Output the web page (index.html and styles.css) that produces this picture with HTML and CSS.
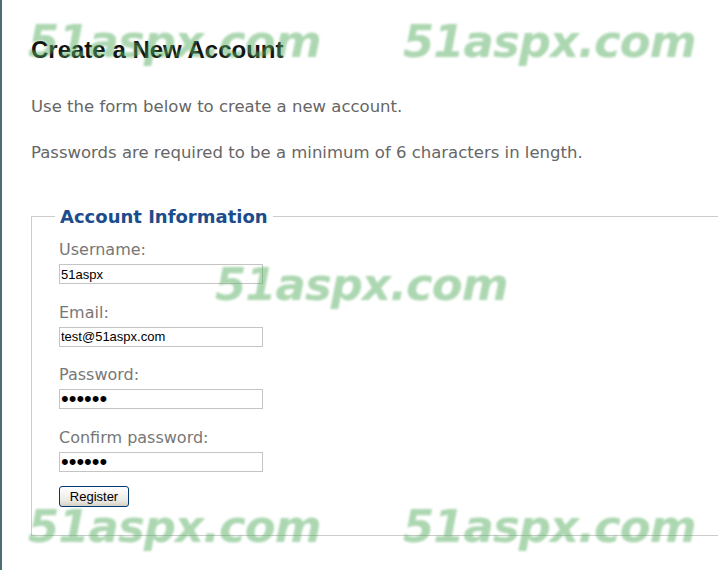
FILE: index.html
```html
<!DOCTYPE html>
<html lang="en">
<head>
    <meta charset="UTF-8">
    <meta name="viewport" content="width=device-width, initial-scale=1.0">
    <title>Create a New Account</title>
    <link rel="stylesheet" href="styles.css">
</head>
<body>

    <div class="page">
        <h2>Create a New Account</h2>
        <p>Use the form below to create a new account.</p>
        <p>Passwords are required to be a minimum of 6 characters in length.</p>

        <fieldset class="register">
            <legend>Account Information</legend>
            <div class="field">
                <label for="username">Username:</label>
                <input type="text" id="username" value="51aspx">
            </div>
            <div class="field">
                <label for="email">Email:</label>
                <input type="text" id="email" value="test@51aspx.com">
            </div>
            <div class="field">
                <label for="password">Password:</label>
                <input type="password" id="password" value="123456">
            </div>
            <div class="field">
                <label for="confirm">Confirm password:</label>
                <input type="password" id="confirm" value="123456">
            </div>
            <button class="register-btn">Register</button>
        </fieldset>
    </div>

    <!-- watermark -->
    <div class="mark mark-tl">51aspx.com</div>
    <div class="mark mark-tr">51aspx.com</div>
    <div class="mark mark-mid">51aspx.com</div>
    <div class="mark mark-bl">51aspx.com</div>
    <div class="mark mark-br">51aspx.com</div>

</body>
</html>
```

FILE: styles.css
```css
body {
    margin: 0;
    padding: 0;
    height: 570px;
    overflow: hidden;
    background-color: #fff;
    font-family: 'DejaVu Sans', Verdana, sans-serif;
    color: #666;
}

.page {
    height: 100%;
    border-left: 2px solid #4e6e75;
    padding: 31px 0 0 29px;
    box-sizing: border-box;
}

h2 {
    margin: 5px 0 0;
    font-family: 'Liberation Sans', Arial, sans-serif;
    font-size: 24px;
    line-height: 28px;
    font-weight: bold;
    color: #111;
}

p {
    margin: 0;
    font-size: 16.5px;
    line-height: 20px;
}

h2 + p {
    margin-top: 33px;
}

p + p {
    margin-top: 26px;
}

.register {
    margin: 43px -40px 0 0;
    padding: 13px 0 28px 27px;
    border: 1px solid #ccc;
}

.register legend {
    padding: 0 5px;
    margin-left: -4px;
    font-size: 18px;
    line-height: 21px;
    font-weight: bold;
    color: #1c4c8c;
}

.field {
    margin-bottom: 18.5px;
}

.field label {
    display: block;
    font-size: 16px;
    line-height: 20px;
    margin-bottom: 4px;
    color: #777;
}

.field input {
    display: block;
    width: 204px;
    height: 20px;
    box-sizing: border-box;
    margin: 0;
    padding: 1px 1px;
    border: 1px solid #c4c4c4;
    font-family: 'Liberation Sans', Arial, sans-serif;
    font-size: 13px;
    color: #000;
}

.field input[type="password"] {
    font-size: 22px;
    line-height: 16px;
    padding: 0 1px;
}

.register-btn {
    display: block;
    margin-top: -4px;
    width: 70px;
    height: 21px;
    padding: 0;
    font-family: 'Liberation Sans', Arial, sans-serif;
    font-size: 13px;
    color: #000;
    background: linear-gradient(#fff, #ecebe6 70%, #d6d0c5);
    border: 1px solid #003c74;
    border-radius: 3px;
}

/* watermark overlay */
.mark {
    position: absolute;
    font-family: 'DejaVu Sans', Verdana, sans-serif;
    font-size: 45px;
    font-weight: bold;
    font-style: italic;
    letter-spacing: -1px;
    line-height: 45px;
    color: rgba(90, 175, 100, 0.5);
    filter: blur(0.8px);
    pointer-events: none;
}

.mark-tl { left: 28px; top: 19px; }
.mark-tr { left: 403px; top: 19px; }
.mark-mid { left: 215px; top: 262px; }
.mark-bl { left: 28px; top: 504px; }
.mark-br { left: 403px; top: 504px; }
```
